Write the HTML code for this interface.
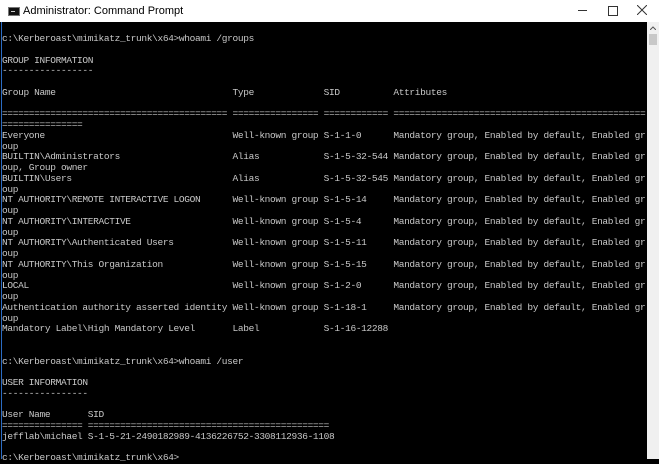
<!DOCTYPE html>
<html><head><meta charset="utf-8"><style>
html,body{margin:0;padding:0;width:659px;height:459px;overflow:hidden;background:#000}
.title{position:absolute;left:0;top:0;width:659px;height:22px;background:#fff}
.title .t{position:absolute;left:23px;top:5px;font:11px "Liberation Sans",sans-serif;color:#000}
.icon{position:absolute;left:8px;top:7px;width:10px;height:7px;background:#111;border:1px solid #777}
.icon:after{content:"";position:absolute;left:2px;top:3px;width:4px;height:1px;background:#ccc}
.term{position:absolute;left:1px;top:22px;width:646px;height:437px;background:#000;border-left:1px solid #2b6cc4}
pre{position:absolute;left:2px;top:34px;margin:0;font-family:"Liberation Mono",monospace;font-size:9.5px;line-height:10.75px;color:#c8c8c8;white-space:pre;letter-spacing:-0.34px}
.sb{position:absolute;left:647px;top:22px;width:12px;height:437px;background:#f0f0f0}
.thumb{position:absolute;left:2px;top:12px;width:8px;height:11px;background:#c8c8c8}
</style></head><body>
<div class="title"><div class="icon"></div><div class="t">Administrator: Command Prompt</div>
<div style="position:absolute;left:578px;top:10px;width:9px;height:1px;background:#333"></div>
<div style="position:absolute;left:608px;top:6px;width:8px;height:8px;border:1px solid #333"></div>
<svg style="position:absolute;left:637px;top:5px" width="10" height="10"><path d="M0 0L10 10M10 0L0 10" stroke="#333" stroke-width="1"/></svg>
</div>
<div class="term"></div>
<div class="sb"><svg style="position:absolute;left:3px;top:4px" width="6" height="4"><path d="M0 4L3 1L6 4" stroke="#555" fill="none"/></svg><div class="thumb"></div></div>
<pre>c:\Kerberoast\mimikatz_trunk\x64>whoami /groups

GROUP INFORMATION
-----------------

Group Name                                 Type             SID          Attributes

========================================== ================ ============ ===============================================
===============
Everyone                                   Well-known group S-1-1-0      Mandatory group, Enabled by default, Enabled gr
oup
BUILTIN\Administrators                     Alias            S-1-5-32-544 Mandatory group, Enabled by default, Enabled gr
oup, Group owner
BUILTIN\Users                              Alias            S-1-5-32-545 Mandatory group, Enabled by default, Enabled gr
oup
NT AUTHORITY\REMOTE INTERACTIVE LOGON      Well-known group S-1-5-14     Mandatory group, Enabled by default, Enabled gr
oup
NT AUTHORITY\INTERACTIVE                   Well-known group S-1-5-4      Mandatory group, Enabled by default, Enabled gr
oup
NT AUTHORITY\Authenticated Users           Well-known group S-1-5-11     Mandatory group, Enabled by default, Enabled gr
oup
NT AUTHORITY\This Organization             Well-known group S-1-5-15     Mandatory group, Enabled by default, Enabled gr
oup
LOCAL                                      Well-known group S-1-2-0      Mandatory group, Enabled by default, Enabled gr
oup
Authentication authority asserted identity Well-known group S-1-18-1     Mandatory group, Enabled by default, Enabled gr
oup
Mandatory Label\High Mandatory Level       Label            S-1-16-12288


c:\Kerberoast\mimikatz_trunk\x64>whoami /user

USER INFORMATION
----------------

User Name       SID
=============== =============================================
jefflab\michael S-1-5-21-2490182989-4136226752-3308112936-1108

c:\Kerberoast\mimikatz_trunk\x64></pre>
</body></html>
